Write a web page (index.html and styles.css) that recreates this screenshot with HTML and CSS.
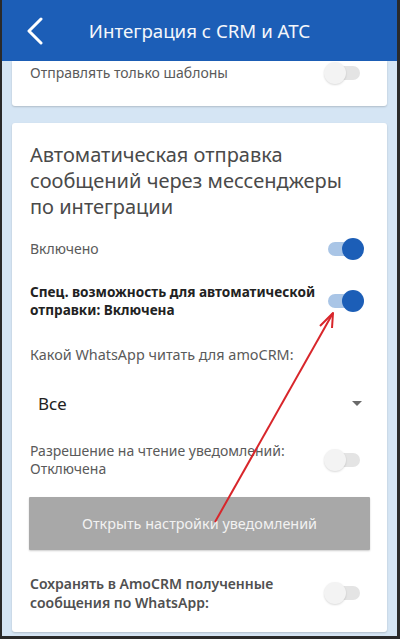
FILE: index.html
```html
<!DOCTYPE html>
<html lang="ru">
<head>
    <meta charset="UTF-8">
    <meta name="viewport" content="width=device-width, initial-scale=1.0">
    <title>Интеграция с CRM и АТС</title>
    <link rel="stylesheet" href="styles.css">
</head>
<body>
    <div class="screen">
        <div class="header">
            <div class="back">
                <svg width="17" height="28" viewBox="0 0 17 28">
                    <polyline points="15,2 3,14 15,26" fill="none" stroke="#fff" stroke-width="3" stroke-linecap="round" stroke-linejoin="round"/>
                </svg>
            </div>
            <div class="title">Интеграция с CRM и АТС</div>
            <div></div>
        </div>

        <div class="content">
            <div class="card card-top">
                <div class="row row-single">
                    <span class="text">Отправлять только шаблоны</span>
                    <span class="switch"><span class="track"></span><span class="thumb"></span></span>
                </div>
            </div>

            <div class="card card-main">
                <div class="heading">Автоматическая отправка сообщений через мессенджеры по интеграции</div>

                <div class="row row-on1">
                    <span class="text">Включено</span>
                    <span class="switch on"><span class="track"></span><span class="thumb"></span></span>
                </div>

                <div class="row row-spec">
                    <span class="text strong">Спец. возможность для автоматической<br>отправки: Включена</span>
                    <span class="switch on"><span class="track"></span><span class="thumb"></span></span>
                </div>

                <div class="label">Какой WhatsApp читать для amoCRM:</div>

                <div class="select">
                    <span>Все</span>
                    <span class="caret"></span>
                </div>

                <div class="row row-perm">
                    <span class="text">Разрешение на чтение уведомлений:<br>Отключена</span>
                    <span class="switch"><span class="track"></span><span class="thumb"></span></span>
                </div>

                <button class="btn">Открыть настройки уведомлений</button>

                <div class="row row-save">
                    <span class="text medium">Сохранять в AmoCRM полученные<br>сообщения по WhatsApp:</span>
                    <span class="switch"><span class="track"></span><span class="thumb"></span></span>
                </div>
            </div>
        </div>

        <svg class="arrow" width="395" height="636" viewBox="0 0 395 636">
            <line x1="213" y1="522" x2="331" y2="313" stroke="#d8262b" stroke-width="2"/>
            <polyline points="318,326 331,313 330,328" fill="none" stroke="#d8262b" stroke-width="2" stroke-linejoin="round"/>
        </svg>
    </div>
</body>
</html>
```

FILE: styles.css
```css
body {
    margin: 0;
    background-color: #2a2a2a;
    font-family: "Noto Sans", "Open Sans", sans-serif;
}
.screen {
    position: relative;
    width: 395px;
    height: 636px;
    margin-left: 2px;
    overflow: hidden;
    background-color: #d5e5f4;
}
.header {
    height: 61px;
    background-color: #1c5eb7;
    display: grid;
    grid-template-columns: 60px 1fr 60px;
    align-items: center;
}
.back {
    padding-left: 24px;
    display: flex;
    align-items: center;
}
.title {
    color: #f4f7fb;
    font-size: 18.7px;
    text-align: center;
    white-space: nowrap;
}
.content {
    padding: 0 10px;
}
.card {
    background-color: #fff;
    border-radius: 3px;
    box-shadow: 0 1px 2px rgba(0,0,0,0.18);
    box-sizing: border-box;
    padding: 0 23px 0 18px;
}
.card-top {
    height: 45px;
    border-radius: 0 0 3px 3px;
}
.card-main {
    margin-top: 17px;
    height: 509px;
    padding-top: 19px;
}
.row {
    display: flex;
    align-items: center;
    justify-content: space-between;
}
.row-single {
    height: 24px;
}
.text {
    font-size: 14px;
    line-height: 18px;
    color: #5a5a5a;
    white-space: nowrap;
}
.strong {
    font-weight: bold;
    font-size: 13.6px;
    color: #222;
}
.medium {
    font-weight: 600;
    color: #505050;
}
.heading {
    font-size: 20px;
    line-height: 26px;
    color: #4a4a4a;
    padding-right: 20px;
}
.row-on1 {
    height: 36px;
    margin-top: 11px;
}
.row-spec {
    height: 36px;
    margin-top: 16px;
}
.label {
    margin-top: 26px;
    font-size: 14.4px;
    line-height: 20px;
    color: #5a5a5a;
}
.select {
    margin-top: 18px;
    height: 40px;
    display: flex;
    align-items: center;
    justify-content: space-between;
    padding-left: 8px;
    font-size: 17px;
    color: #222;
}
.caret {
    width: 0;
    height: 0;
    border-left: 5px solid transparent;
    border-right: 5px solid transparent;
    border-top: 5px solid #6a6a6a;
    margin-right: 2px;
}
.row-perm {
    height: 36px;
    margin-top: 19px;
}
.btn {
    display: block;
    width: 341px;
    height: 53px;
    margin: 19px 0 0 -1px;
    border: none;
    border-radius: 1px;
    background-color: #a8a8a8;
    box-shadow: 0 1px 2px rgba(0,0,0,0.2);
    color: #f2f2f2;
    font-family: inherit;
    font-size: 14.4px;
}
.row-save {
    height: 38px;
    margin-top: 24px;
}
.row-save .text {
    line-height: 19px;
}
.switch {
    position: relative;
    flex: none;
    width: 40px;
    height: 22px;
}
.track {
    position: absolute;
    left: 4px;
    right: 4px;
    top: 4px;
    height: 14px;
    border-radius: 7px;
    background-color: #e4e4e4;
}
.thumb {
    position: absolute;
    left: 0;
    top: 0;
    width: 22px;
    height: 22px;
    border-radius: 50%;
    background-color: #f3f3f3;
    box-shadow: 0 1px 2px rgba(0,0,0,0.15);
}
.switch.on .track {
    background-color: #a9c5e6;
}
.switch.on .thumb {
    left: auto;
    right: 0;
    background-color: #1c5eb7;
    box-shadow: none;
}
.arrow {
    position: absolute;
    left: 0;
    top: 0;
    pointer-events: none;
}
```
